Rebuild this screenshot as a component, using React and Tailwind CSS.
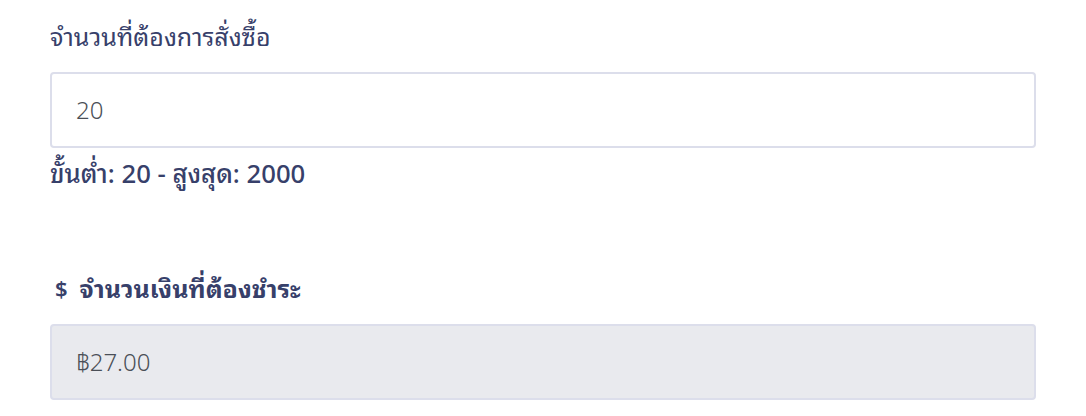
export default function App() {
  const font = { fontFamily: '"Noto Sans", "Noto Sans Thai Looped", "Noto Sans Thai", "Open Sans", sans-serif' };
  return (
    <div className="bg-white w-[1086px] h-[416px] px-[50px] pt-[18px]" style={font}>
      <label className="block text-[25px] leading-[36px] text-[#37406a]">จำนวนที่ต้องการสั่งซื้อ</label>
      <div className="mt-[18px] h-[76px] border-2 border-[#dcdeeb] rounded-[4px] bg-white flex items-center px-[24px] text-[24px] font-light text-[#4a4f57]">20</div>
      <div className="mt-[8px] text-[25.7px] leading-[36px] font-medium text-[#37406a]">ขั้นต่ำ: 20 - สูงสุด: 2000</div>
      <div className="mt-[78px] flex items-center text-[25px] leading-[36px] font-bold text-[#37406a]">
        <span className="ml-[5px] mr-[12px] text-[22px] font-semibold">$</span>
        <span>จำนวนเงินที่ต้องชำระ</span>
      </div>
      <div className="mt-[18px] h-[76px] border-2 border-[#dcdeeb] rounded-[4px] bg-[#e9eaee] flex items-center px-[24px] text-[24px] font-light text-[#4a4f57]">฿27.00</div>
    </div>
  );
}
